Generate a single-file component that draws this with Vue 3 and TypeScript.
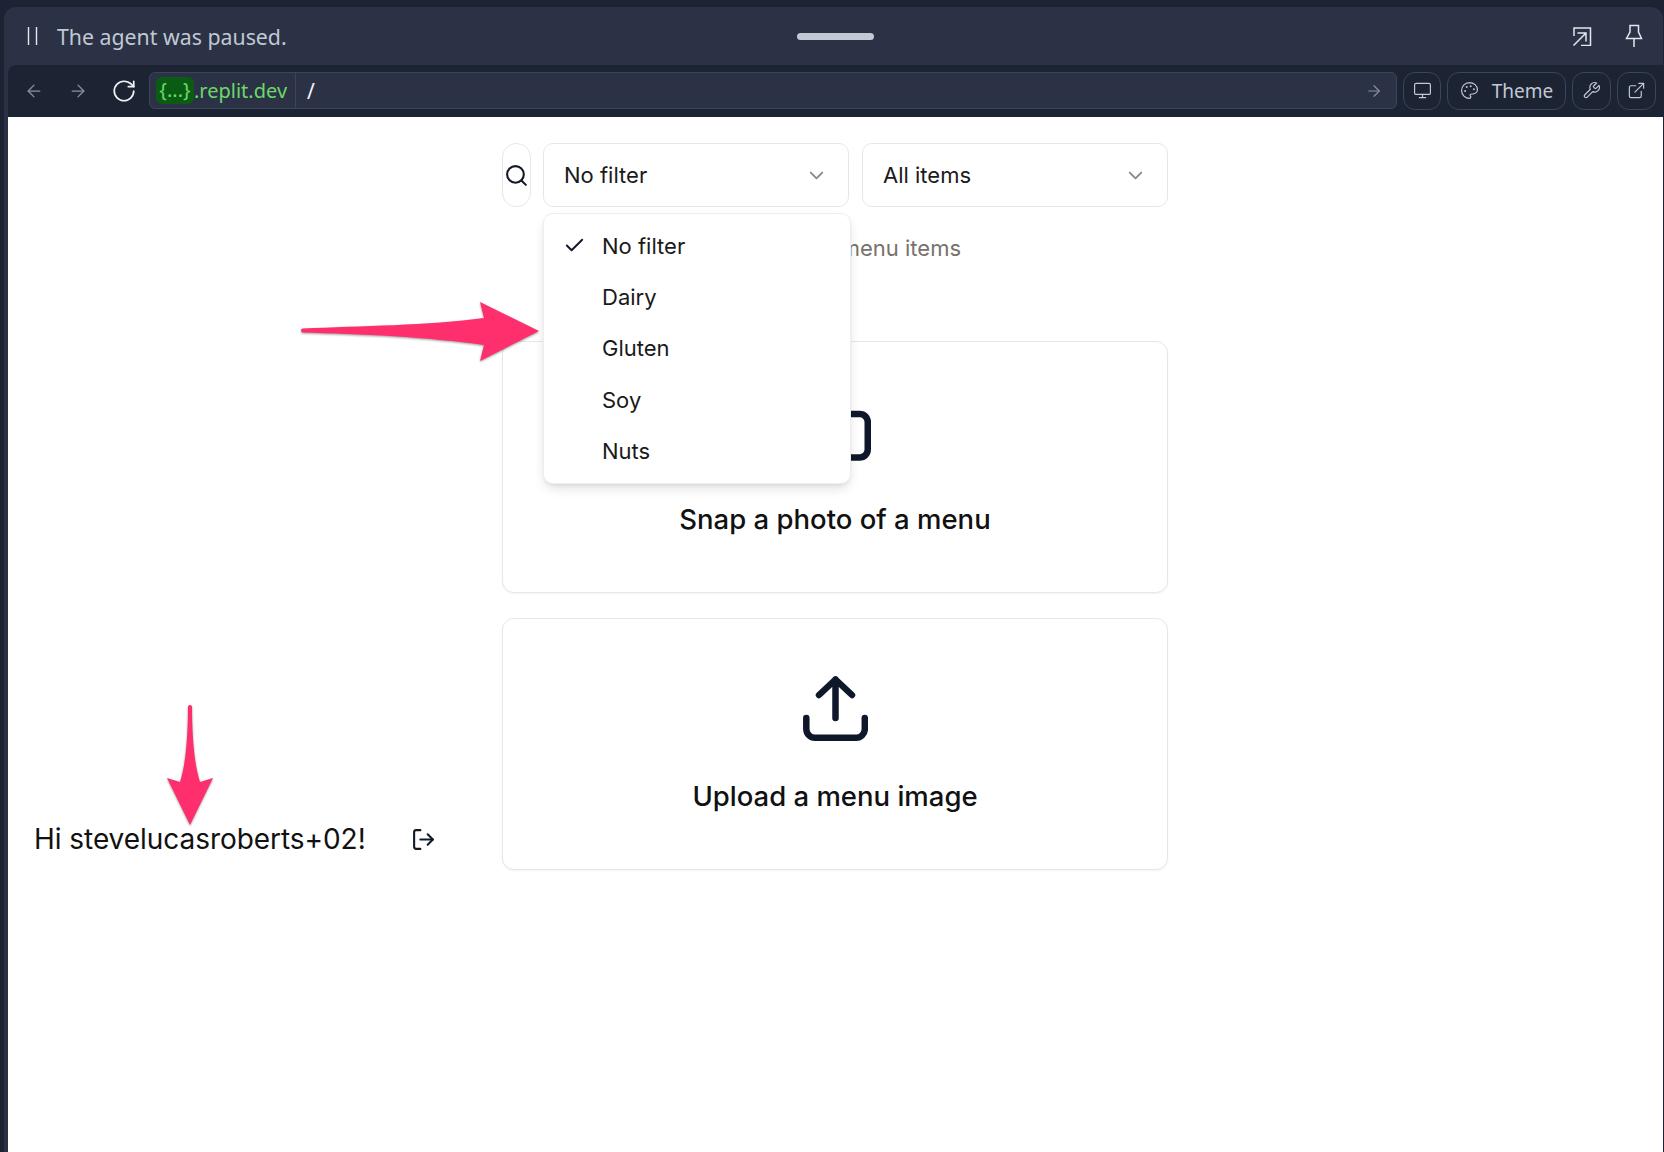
<script setup lang="ts">
const filters = ['No filter', 'Dairy', 'Gluten', 'Soy', 'Nuts']
const selected = 'No filter'
</script>

<template>
  <div class="window">
    <div class="panel">
      <div class="status-bar">
        <svg class="pause" viewBox="0 0 11 18" width="11" height="18">
          <path d="M1.5 0v18M9.5 0v18" fill="none" stroke="currentColor" stroke-width="1.4" />
        </svg>
        <span class="status-text">The agent was paused.</span>
        <span class="handle"></span>
        <div class="status-actions">
          <svg viewBox="0 0 20 20" width="20" height="20" fill="none" stroke="currentColor" stroke-width="1.5">
            <path d="M2 10V2h16.500v17.500H9" />
            <path d="M1.500 19.500 14 7M5.500 7H14v8.500" />
          </svg>
          <svg viewBox="0 0 18 24" width="18" height="24" fill="none" stroke="currentColor" stroke-width="1.5">
            <path d="M5 1.500h8.500V8l3 6.500H1.500L5 8z" />
            <path d="M9 14.500V23" />
          </svg>
        </div>
      </div>

      <div class="browser">
        <div class="toolbar">
          <div class="nav">
            <svg class="ic dim" viewBox="0 0 24 24"><path d="m12 19-7-7 7-7" /><path d="M19 12H5" /></svg>
            <svg class="ic dim" viewBox="0 0 24 24"><path d="M5 12h14" /><path d="m12 5 7 7-7 7" /></svg>
            <svg class="ic reload" viewBox="0 0 24 24"><path d="M21 12a9 9 0 1 1-9-9c2.520 0 4.930 1 6.740 2.740L21 8" /><path d="M21 3v5h-5" /></svg>
          </div>
          <div class="url">
            <div class="host"><span class="chip">{...}</span>.replit.dev</div>
            <div class="path">/</div>
            <svg class="ic go" viewBox="0 0 24 24"><path d="M5 12h14" /><path d="m12 5 7 7-7 7" /></svg>
          </div>
          <button class="tb-btn monitor">
            <svg class="ic" viewBox="0 0 24 24"><rect x="2" y="3" width="20" height="14" rx="2" /><path d="M8 21h8M12 17v4" /></svg>
          </button>
          <button class="tb-btn theme">
            <svg class="ic" viewBox="0 0 24 24">
              <circle cx="13.500" cy="6.500" r=".5" /><circle cx="17.500" cy="10.500" r=".5" /><circle cx="8.500" cy="7.500" r=".5" /><circle cx="6.500" cy="12.500" r=".5" />
              <path d="M12 2C6.500 2 2 6.500 2 12s4.500 10 10 10c.926 0 1.648-.746 1.648-1.688 0-.437-.18-.835-.437-1.125-.29-.289-.438-.652-.438-1.125a1.640 1.640 0 0 1 1.668-1.668h1.996c3.051 0 5.555-2.503 5.555-5.554C21.965 6.012 17.461 2 11.994 2z" />
            </svg>
            <span>Theme</span>
          </button>
          <button class="tb-btn square">
            <svg class="ic" viewBox="0 0 24 24"><path d="M14.700 6.300a1 1 0 0 0 0 1.400l1.600 1.600a1 1 0 0 0 1.400 0l3.770-3.770a6 6 0 0 1-7.940 7.940l-6.910 6.910a2.120 2.120 0 0 1-3-3l6.910-6.910a6 6 0 0 1 7.940-7.940l-3.760 3.760z" /></svg>
          </button>
          <button class="tb-btn square">
            <svg class="ic" viewBox="0 0 24 24"><path d="M15 3h6v6" /><path d="M10 14 21 3" /><path d="M18 13v6a2 2 0 0 1-2 2H5a2 2 0 0 1-2-2V8a2 2 0 0 1 2-2h6" /></svg>
          </button>
        </div>

        <div class="page">
          <aside class="side">
            <span class="greeting">Hi stevelucasroberts+02!</span>
            <svg class="logout" viewBox="0 0 24 24">
              <path d="M9 21H5a2 2 0 0 1-2-2V5a2 2 0 0 1 2-2h4" /><path d="m16 17 5-5-5-5" /><path d="M21 12H9" />
            </svg>
          </aside>

          <main class="center">
            <div class="filters">
              <button class="search-btn">
                <svg viewBox="0 0 24 24" width="25" height="25"><circle cx="11" cy="11" r="8" /><path d="m21 21-4.300-4.300" /></svg>
              </button>
              <div class="select-wrap">
                <div class="select">
                  <span>No filter</span>
                  <svg class="chev" viewBox="0 0 24 24"><path d="m6 9 6 6 6-6" /></svg>
                </div>
                <ul class="menu">
                  <li v-for="f in filters" :key="f">
                    <svg v-if="f === selected" class="check" viewBox="0 0 24 24"><path d="M20 6 9 17l-5-5" /></svg>
                    <span>{{ f }}</span>
                  </li>
                </ul>
              </div>
              <div class="select">
                <span>All items</span>
                <svg class="chev" viewBox="0 0 24 24"><path d="m6 9 6 6 6-6" /></svg>
              </div>
            </div>

            <p class="hint">Search your menu items</p>

            <div class="card first">
              <svg class="card-icon" viewBox="0 0 72 65" width="72" height="65">
                <path d="M18 15h6l5-8h14l5 8h12.750a8 8 0 0 1 8 8v27.500a8 8 0 0 1-8 8h-49.500a8 8 0 0 1-8-8V23a8 8 0 0 1 8-8z" />
                <circle cx="36" cy="36" r="11" />
              </svg>
              <div class="card-label">Snap a photo of a menu</div>
            </div>
            <div class="card">
              <svg class="card-icon" viewBox="0 0 65 65" width="65" height="65">
                <path d="M32.500 42V3.500M16 19 32.500 3.500 49 19" />
                <path d="M3.300 42v11a8.750 8.750 0 0 0 8.750 8.750h41a8.750 8.750 0 0 0 8.750-8.750V42" />
              </svg>
              <div class="card-label">Upload a menu image</div>
            </div>
          </main>

          <!-- annotation arrows drawn over the screenshot -->
          <svg class="arrow arrow-right" viewBox="0 0 242 64" width="242" height="64">
            <path d="M4 27.500C60 25 130 24.500 185 17L181 1l59 29-59 30 4-16C130 36 60 33 4 31.500a2 2 0 0 1 0-4z" />
          </svg>
          <svg class="arrow arrow-down" viewBox="0 0 50 124" width="50" height="124">
            <path d="M23 3a2 2 0 0 1 4 0C27 30 29 60 35 78l13-4-23 47L2 74l13 4C21 60 23 30 23 3z" />
          </svg>
        </div>
      </div>
    </div>
  </div>
</template>

<style>
html, body { margin: 0; background: #1c2333; }
</style>

<style scoped>
.window {
  height: 1152px;
  box-sizing: border-box;
  padding: 7px 1px 0 4px;
  background: #1c2333;
  display: flex;
  flex-direction: column;
  overflow: hidden;
}
.panel {
  flex: 1;
  display: flex;
  flex-direction: column;
  min-height: 0;
  background: #2b3245;
  border-radius: 12px 12px 0 0;
}
.status-bar {
  height: 58px;
  position: relative;
  display: flex;
  align-items: center;
  padding: 0 20px 0 23px;
  color: #c2c8d4;
  font-family: "Noto Sans", sans-serif;
  flex-shrink: 0;
}
.pause { margin-right: 19px; color: #e4e7ec; }
.status-text { font-size: 21.300px; color: #c2c8d4; }
.handle {
  position: absolute;
  left: 793px;
  top: 26px;
  width: 77px;
  height: 7px;
  border-radius: 4px;
  background: #c2c8d4;
}
.status-actions {
  margin-left: auto;
  display: flex;
  align-items: center;
  gap: 33px;
  color: #e4e7ec;
}
.browser {
  flex: 1;
  min-height: 0;
  margin-left: 4px;
  display: flex;
  flex-direction: column;
  background: #1c2333;
  border-radius: 8px 0 0 0;
}
.toolbar {
  height: 52px;
  flex-shrink: 0;
  box-sizing: border-box;
  padding: 6px 7px 7px 16px;
  display: flex;
  align-items: center;
  font-family: "Noto Sans", sans-serif;
}
.ic {
  width: 19px;
  height: 19px;
  fill: none;
  stroke: currentColor;
  stroke-width: 1.500;
  stroke-linecap: round;
  stroke-linejoin: round;
  flex-shrink: 0;
}
.nav {
  display: flex;
  align-items: center;
  gap: 24px;
  width: 125px;
  flex-shrink: 0;
}
.nav .dim { color: #8a93a5; width: 20px; height: 20px; }
.nav .reload { color: #f0f1f4; width: 26px; height: 26px; margin-left: -1px; stroke-width: 1.600; }
.url {
  flex: 1;
  height: 37px;
  box-sizing: border-box;
  display: flex;
  align-items: center;
  background: #2b3245;
  border: 1px solid #3c445c;
  border-radius: 6px;
  color: #f5f6f8;
}
.host {
  height: 100%;
  box-sizing: border-box;
  padding: 0 6px;
  display: flex;
  align-items: center;
  width: 146px;
  flex-shrink: 0;
  border-right: 1px solid #3c445c;
  color: #6bd968;
  font-size: 20px;
}
.chip {
  background: #0a5c12;
  border-radius: 6px;
  height: 27px;
  line-height: 26px;
  padding: 0 2px;
  width: 34px;
  text-align: center;
}
.path { margin-left: 11px; font-size: 21px; }
.go { margin-left: auto; margin-right: 13px; color: #8a93a5; width: 18px; height: 18px; }
.tb-btn {
  height: 38px;
  box-sizing: border-box;
  margin-left: 6px;
  padding: 0;
  display: flex;
  align-items: center;
  justify-content: center;
  background: #1c2333;
  border: 1px solid #3c445c;
  border-radius: 12px;
  color: #c2c8d4;
  font-family: inherit;
  font-size: 19px;
}
.monitor { width: 38px; }
.theme { width: 119px; gap: 13px; }
.square { width: 39px; }
.page {
  flex: 1;
  min-height: 0;
  position: relative;
  background: #fff;
  display: grid;
  grid-template-columns: 494px 666px 1fr;
  align-content: start;
  padding-top: 26px;
  color: #0f172a;
  font-family: Inter, sans-serif;
}
.side {
  align-self: end;
  display: flex;
  align-items: center;
  gap: 45px;
  padding: 0 0 14px 26px;
}
.greeting { font-size: 28px; line-height: 34px; color: #111; white-space: nowrap; letter-spacing: -0.05px; }
.logout {
  width: 25px;
  height: 25px;
  fill: none;
  stroke: #111827;
  stroke-width: 2;
  stroke-linecap: round;
  stroke-linejoin: round;
}
.center { display: flex; flex-direction: column; }
.filters { display: flex; gap: 12px; height: 64px; }
.search-btn {
  width: 29px;
  padding: 0;
  background: #fff;
  border: 1px solid #e5e7eb;
  border-radius: 14px;
  display: flex;
  align-items: center;
  justify-content: center;
  flex-shrink: 0;
}
.search-btn svg {
  fill: none;
  stroke: #111827;
  stroke-width: 2;
  stroke-linecap: round;
  stroke-linejoin: round;
}
.select-wrap { position: relative; display: flex; margin-right: 1px; }
.select {
  width: 306px;
  box-sizing: border-box;
  border: 1px solid #e5e7eb;
  border-radius: 10px;
  padding: 0 20px;
  display: flex;
  align-items: center;
  justify-content: space-between;
  font-size: 22px;
  color: #1a1a1a;
}
.chev {
  width: 23px;
  height: 23px;
  fill: none;
  stroke: #111827;
  stroke-width: 2;
  stroke-linecap: round;
  stroke-linejoin: round;
  opacity: .5;
}
.menu {
  position: absolute;
  top: 70px;
  left: 0;
  z-index: 3;
  width: 308px;
  height: 271px;
  box-sizing: border-box;
  margin: 0;
  padding: 6px 0 0 58px;
  list-style: none;
  background: #fff;
  border: 1px solid #eceef1;
  border-radius: 10px;
  box-shadow: 0 6px 12px -2px rgba(0, 0, 0, .13), 0 2px 4px -2px rgba(0, 0, 0, .1);
}
.menu li {
  position: relative;
  height: 51.400px;
  display: flex;
  align-items: center;
  font-size: 22px;
  color: #1a1a1a;
}
.check {
  position: absolute;
  left: -39px;
  width: 23px;
  height: 23px;
  fill: none;
  stroke: #111827;
  stroke-width: 2;
  stroke-linecap: round;
  stroke-linejoin: round;
}
.hint {
  margin: 28px 0 0;
  height: 27px;
  line-height: 27px;
  text-align: center;
  font-size: 22px;
  color: #78716c;
}
.card {
  height: 252px;
  box-sizing: border-box;
  margin-top: 25px;
  padding-top: 57px;
  display: flex;
  flex-direction: column;
  align-items: center;
  background: #fff;
  border: 1px solid #e5e7eb;
  border-radius: 12px;
  box-shadow: 0 1px 2px rgba(0, 0, 0, .05);
}
.card.first { margin-top: 79px; }
.card-icon {
  fill: none;
  stroke: #0f172a;
  stroke-width: 6.500;
  stroke-linecap: round;
  stroke-linejoin: round;
}
.card-label {
  margin-top: 38px;
  font-size: 27.500px;
  line-height: 34px;
  font-weight: 500;
  color: #111;
}
.arrow {
  position: absolute;
  fill: #ff2e6c;
  filter: drop-shadow(0 1px 1px rgba(0, 0, 0, .4));
  z-index: 4;
}
.arrow-right { left: 291px; top: 184px; }
.arrow-down { left: 157px; top: 587px; }
</style>
